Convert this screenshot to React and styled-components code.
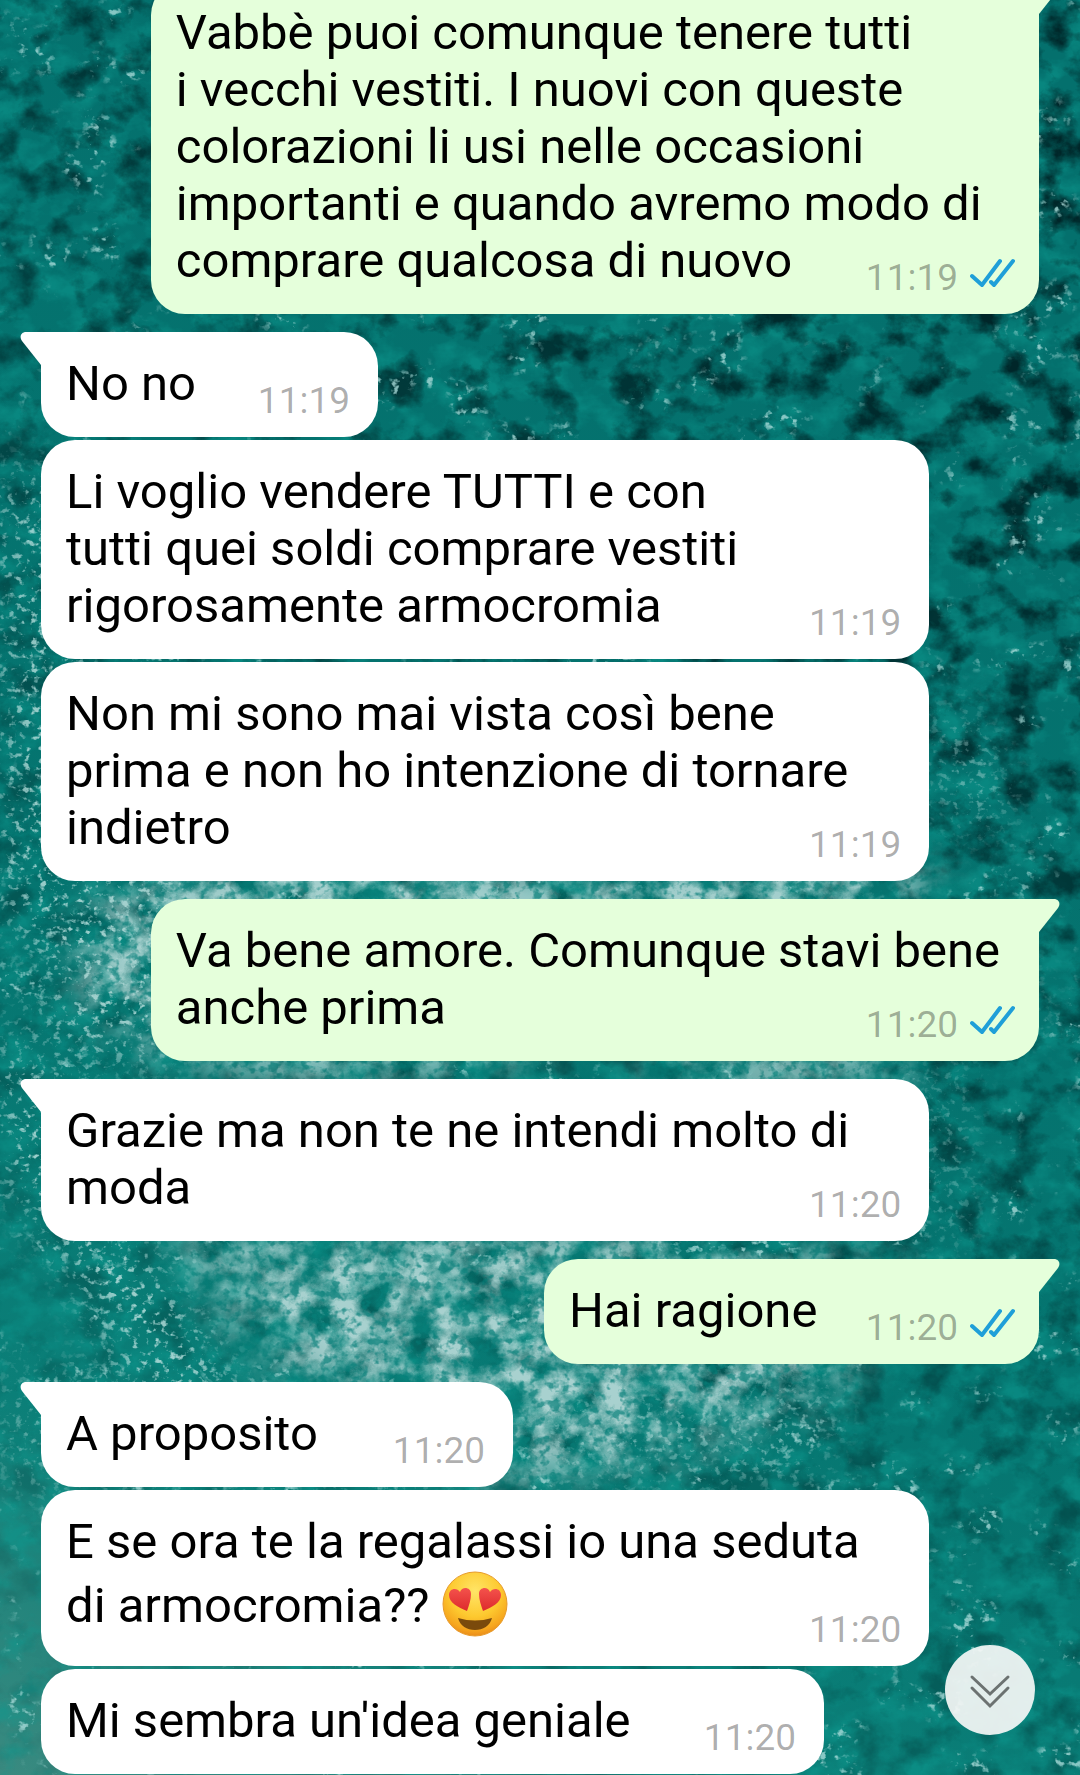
import React from 'react';
import styled, { createGlobalStyle } from 'styled-components';

const messages = [
  {
    id: 1,
    own: true,
    tail: true,
    time: '11:19',
    lines: [
      'Vabbè puoi comunque tenere tutti',
      'i vecchi vestiti. I nuovi con queste',
      'colorazioni li usi nelle occasioni',
      'importanti e quando avremo modo di',
      'comprare qualcosa di nuovo',
    ],
  },
  { id: 2, tail: true, time: '11:19', lines: ['No no'], width: '337px' },
  {
    id: 3,
    time: '11:19',
    lines: [
      'Li voglio vendere TUTTI e con',
      'tutti quei soldi comprare vestiti',
      'rigorosamente armocromia',
    ],
  },
  {
    id: 4,
    time: '11:19',
    lines: [
      'Non mi sono mai vista così bene',
      'prima e non ho intenzione di tornare',
      'indietro',
    ],
  },
  {
    id: 5,
    own: true,
    tail: true,
    time: '11:20',
    lines: ['Va bene amore. Comunque stavi bene', 'anche prima'],
  },
  {
    id: 6,
    tail: true,
    time: '11:20',
    lines: ['Grazie ma non te ne intendi molto di', 'moda'],
  },
  { id: 7, own: true, tail: true, time: '11:20', lines: ['Hai ragione'], width: '495px' },
  { id: 8, tail: true, time: '11:20', lines: ['A proposito'], width: '472px' },
  {
    id: 9,
    time: '11:20',
    lines: ['E se ora te la regalassi io una seduta', 'di armocromia?? '],
    emoji: true,
  },
  { id: 10, time: '11:20', lines: ["Mi sembra un'idea geniale"], width: '783px' },
];

function Wallpaper() {
  return (
    <WallpaperSvg viewBox="0 0 1080 1775" preserveAspectRatio="xMidYMid slice" aria-hidden="true">
      <defs>
        <linearGradient id="sea" x1="0.3" y1="0" x2="0" y2="1">
          <stop offset="0" stopColor="#04706d" />
          <stop offset="0.55" stopColor="#057570" />
          <stop offset="0.8" stopColor="#0b7f78" />
          <stop offset="1" stopColor="#3a8a80" />
        </linearGradient>
        <linearGradient id="depth" x1="0" y1="1" x2="0.5" y2="0">
          <stop offset="0" stopColor="#fff" stopOpacity="0.1" />
          <stop offset="0.45" stopColor="#fff" stopOpacity="0.4" />
          <stop offset="1" stopColor="#fff" stopOpacity="1" />
        </linearGradient>
        <filter id="soft" x="-50%" y="-50%" width="200%" height="200%">
          <feGaussianBlur stdDeviation="24" />
        </filter>
        <filter id="ripples" x="0" y="0" width="100%" height="100%" colorInterpolationFilters="sRGB">
          <feTurbulence type="fractalNoise" baseFrequency="0.03 0.04" numOctaves="5" seed="8" />
          <feColorMatrix values="0 0 0 0 0.05  0 0 0 0 0.6  0 0 0 0 0.56  3 0 0 0 -1.3" />
        </filter>
        <filter id="shadows" x="0" y="0" width="100%" height="100%" colorInterpolationFilters="sRGB">
          <feTurbulence type="fractalNoise" baseFrequency="0.026 0.03" numOctaves="5" seed="21" />
          <feColorMatrix values="0 0 0 0 0  0 0 0 0 0.15  0 0 0 0 0.16  0 3.4 0 0 -1.6" />
        </filter>
        <filter id="foam" x="0" y="0" width="100%" height="100%" colorInterpolationFilters="sRGB">
          <feTurbulence type="fractalNoise" baseFrequency="0.03 0.035" numOctaves="6" seed="5" />
          <feColorMatrix values="0 0 0 0 0.66  0 0 0 0 0.82  0 0 0 0 0.81  2.4 0 1.6 0 -1.5" />
        </filter>
        <filter id="spray" x="0" y="0" width="100%" height="100%" colorInterpolationFilters="sRGB">
          <feTurbulence type="fractalNoise" baseFrequency="0.1 0.11" numOctaves="3" seed="14" />
          <feColorMatrix values="0 0 0 0 0.03  0 0 0 0 0.5  0 0 0 0 0.48  5 0 0 0 -2.5" />
        </filter>
        <filter id="grain" x="0" y="0" width="100%" height="100%" colorInterpolationFilters="sRGB">
          <feTurbulence type="fractalNoise" baseFrequency="0.13 0.15" numOctaves="3" seed="31" />
          <feColorMatrix values="0 0 0 0 0.68  0 0 0 0 0.85  0 0 0 0 0.84  6 0 0 0 -3.4" />
        </filter>
        <filter id="specks" x="0" y="0" width="100%" height="100%" colorInterpolationFilters="sRGB">
          <feTurbulence type="fractalNoise" baseFrequency="0.11 0.13" numOctaves="3" seed="3" result="fine" />
          <feColorMatrix in="fine" values="0 0 0 0 0.66  0 0 0 0 0.86  0 0 0 0 0.85  6 0 0 0 -3.5" result="dots" />
          <feTurbulence type="fractalNoise" baseFrequency="0.016 0.022" numOctaves="3" seed="40" result="wide" />
          <feColorMatrix in="wide" values="0 0 0 0 1  0 0 0 0 1  0 0 0 0 1  6 0 0 0 -3.3" result="patches" />
          <feComposite in="dots" in2="patches" operator="in" />
        </filter>
        <mask id="depthMask">
          <rect width="1080" height="1775" fill="url(#depth)" />
        </mask>
        <mask id="foamMask">
          <g filter="url(#soft)" fill="#fff">
            <ellipse cx="350" cy="960" rx="270" ry="120" />
            <ellipse cx="740" cy="900" rx="200" ry="50" />
            <ellipse cx="780" cy="1070" rx="140" ry="24" />
            <path d="M170 1230 620 1230 900 1270 830 1390 640 1460 500 1480 330 1400 240 1330Z" />
          </g>
        </mask>
        <mask id="grainMask">
          <g filter="url(#soft)" fill="#fff">
            <path d="M0 460 60 480 100 760 200 900 180 1060 60 1060 40 960 0 900Z" opacity="0.9" />
            <path d="M0 1000 70 1110 130 1230 240 1390 150 1400 60 1250 0 1160Z" />
            <path d="M0 1370 200 1370 500 1490 0 1490Z" opacity="0.5" />
            <path d="M940 680 1000 760 1010 840 940 820Z" opacity="0.6" />
            <path d="M980 960 1040 980 1040 1040 980 1010Z" opacity="0.6" />
            <path d="M930 1060 960 1060 960 1250 930 1250Z" opacity="0.7" />
            <path d="M540 1400 840 1370 820 1480 540 1480Z" opacity="0.6" />
          </g>
        </mask>
      </defs>
      <rect width="1080" height="1775" fill="url(#sea)" />
      <rect width="1080" height="1775" filter="url(#ripples)" opacity="0.55" />
      <g mask="url(#depthMask)">
        <rect width="1080" height="1775" filter="url(#shadows)" />
      </g>
      <rect width="1080" height="1775" filter="url(#specks)" opacity="0.8" />
      <g mask="url(#grainMask)">
        <rect width="1080" height="1775" filter="url(#grain)" />
      </g>
      <g mask="url(#foamMask)">
        <rect width="1080" height="1775" filter="url(#foam)" />
        <rect width="1080" height="1775" filter="url(#spray)" opacity="0.7" />
      </g>
    </WallpaperSvg>
  );
}

function HeartEyes() {
  return (
    <EmojiSvg viewBox="0 0 66 71" role="img" aria-label="😍">
      <defs>
        <radialGradient id="face" cx="0.5" cy="0.3" r="0.72">
          <stop offset="0" stopColor="#ffe567" />
          <stop offset="0.55" stopColor="#fdc92f" />
          <stop offset="0.85" stopColor="#f6a51d" />
          <stop offset="1" stopColor="#e8871a" />
        </radialGradient>
        <linearGradient id="heart" x1="0" y1="0" x2="0" y2="1">
          <stop offset="0" stopColor="#f4524c" />
          <stop offset="1" stopColor="#dd2a2c" />
        </linearGradient>
      </defs>
      <circle cx="33" cy="34" r="32" fill="url(#face)" stroke="#e79b2c" strokeWidth="1" />
      <path d="M25 41C16 37 7 33 7 25 7 18 15 17 18 22 20 16 29 17 29 24 29 30 27 35 25 41Z" fill="url(#heart)" />
      <path d="M41 41C50 37 59 33 59 25 59 18 51 17 48 22 46 16 37 17 37 24 37 30 39 35 41 41Z" fill="url(#heart)" />
      <path d="M16 48Q33 53 50 48C48 56 41 60 33 60S18 56 16 48Z" fill="#7a4a0c" />
    </EmojiSvg>
  );
}

function ReadTicks() {
  return (
    <TicksSvg viewBox="0 0 45 30" role="img" aria-label="Letto">
      <path d="M2 19 12 28 30 4M21 25 24 28 43 4" />
    </TicksSvg>
  );
}

function Message({ message }) {
  const { own, tail, time, lines, emoji, width } = message;
  const lastLine = lines[lines.length - 1];

  return (
    <Bubble $own={own} $tail={tail} $width={width}>
      {tail && (
        <Tail $own={own} viewBox="0 0 22 34" aria-hidden="true">
          <path d="M22 0H6C1 0-1 5 2 9L21 33H22Z" />
        </Tail>
      )}
      {lines.slice(0, -1).map((line) => (
        <Line key={line}>{line}</Line>
      ))}
      <LastRow>
        <Line>
          {lastLine}
          {emoji && <HeartEyes />}
        </Line>
        <Meta>
          <time>{time}</time>
          {own && <ReadTicks />}
        </Meta>
      </LastRow>
    </Bubble>
  );
}

function App() {
  return (
    <>
      <GlobalStyle />
      <Chat>
        <Wallpaper />
        <MessageList>
          {messages.map((message) => (
            <Message key={message.id} message={message} />
          ))}
        </MessageList>
        <ScrollButton type="button" aria-label="Vai in fondo">
          <svg viewBox="0 0 90 90" aria-hidden="true">
            <path d="M27 32 45 49 63 32M27 43 45 61 63 43" />
          </svg>
        </ScrollButton>
      </Chat>
    </>
  );
}

const GlobalStyle = createGlobalStyle`
  * {
    box-sizing: border-box;
  }
  body {
    margin: 0;
    background: #067873;
    font-family: Roboto, 'Liberation Sans', sans-serif;
  }
`;

const Chat = styled.main`
  position: relative;
  display: flex;
  flex-direction: column;
  justify-content: flex-end;
  height: 100vh;
  overflow: hidden;
`;

const WallpaperSvg = styled.svg`
  position: absolute;
  inset: 0;
  width: 100%;
  height: 100%;
`;

const MessageList = styled.ol`
  position: relative;
  display: flex;
  flex-direction: column;
  flex-shrink: 0;
  gap: 3px;
  margin: 0;
  padding: 0 41px 1px;
  list-style: none;
`;

const Bubble = styled.li`
  position: relative;
  align-self: ${({ $own }) => ($own ? 'flex-end' : 'flex-start')};
  width: ${({ $width }) => $width || '89%'};
  max-width: 89%;
  margin-top: ${({ $tail }) => ($tail ? '15px' : '0')};
  padding: ${({ $own }) => ($own ? '23px 24px 15px 25px' : '23px 28px 15px 25px')};
  border-radius: 34px;
  ${({ $tail, $own }) =>
    $tail && ($own ? 'border-top-right-radius: 0;' : 'border-top-left-radius: 0;')}
  background: ${({ $own }) => ($own ? '#e5ffdb' : '#ffffff')};
`;

const Tail = styled.svg`
  position: absolute;
  top: 0;
  ${({ $own }) => ($own ? 'right: -21px; transform: scaleX(-1);' : 'left: -21px;')}
  width: 22px;
  height: 34px;
  fill: ${({ $own }) => ($own ? '#e5ffdb' : '#ffffff')};
`;

const Line = styled.p`
  margin: 0;
  color: #000;
  font-size: 49px;
  line-height: 57px;
  white-space: pre-wrap;
`;

const LastRow = styled.div`
  display: flex;
  align-items: flex-end;
  justify-content: space-between;
  ${Line} {
    padding-bottom: 10px;
  }
`;

const Meta = styled.div`
  display: flex;
  gap: 12px;
  color: rgba(0, 0, 0, 0.32);
  font-size: 37px;
  line-height: 42px;
`;

const TicksSvg = styled.svg`
  width: 45px;
  height: 30px;
  fill: none;
  stroke: #1f9fd8;
  stroke-width: 4;
  stroke-linecap: round;
`;

const EmojiSvg = styled.svg`
  width: 66px;
  height: 71px;
  vertical-align: -19px;
`;

const ScrollButton = styled.button`
  position: absolute;
  right: 45px;
  bottom: 40px;
  width: 90px;
  height: 90px;
  padding: 0;
  border: 0;
  border-radius: 50%;
  background: rgba(244, 246, 245, 0.93);
  cursor: pointer;
  svg {
    display: block;
    fill: none;
    stroke: #6c7271;
    stroke-width: 3;
    stroke-linecap: round;
  }
`;

export default App;
